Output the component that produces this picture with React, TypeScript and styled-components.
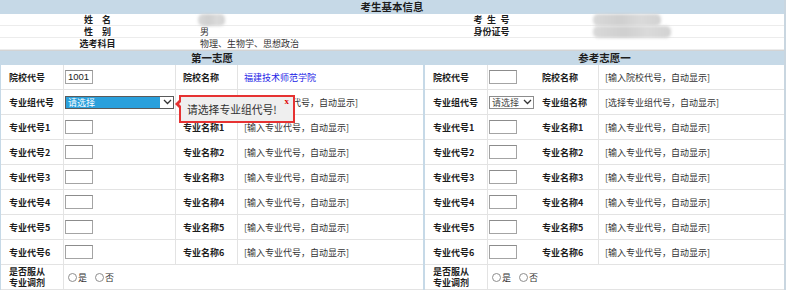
import React from "react";
import styled, { createGlobalStyle } from "styled-components";

const BLUE = "#c6d9e7";
const LINE = "#e3e3e3";

const Global = createGlobalStyle`
  html, body { margin: 0; padding: 0; background: #ffffff; }
  body {
    font-family: "Noto Sans CJK SC", "Noto Sans", sans-serif;
    font-size: 9px;
    color: #222;
  }
  * { box-sizing: border-box; }
`;

const Page = styled.div`
  position: relative;
  width: 786px;
  border-right: 2px solid #c9d6e0;
`;

const TopBar = styled.div`
  height: 14px;
  line-height: 14px;
  background: ${BLUE};
  text-align: center;
  font-weight: 700;
  font-size: 10.5px;
  color: #1c1c1c;
`;

const InfoGrid = styled.div`
  display: grid;
  grid-template-columns: 195px 198px 197px 1fr;
  grid-auto-rows: 12px;
`;

const InfoLabel = styled.div`
  border-bottom: 1px solid #ececec;
  text-align: center;
  font-weight: 700;
  line-height: 11px;
  color: #1c1c1c;
`;

const InfoValue = styled.div`
  border-bottom: 1px solid #ececec;
  padding-left: 5px;
  line-height: 11px;
  color: #333;
  display: flex;
  align-items: center;
`;

const Blur = styled.span<{ $w: number }>`
  display: inline-block;
  width: ${(p) => p.$w}px;
  height: 12px;
  border-radius: 5px;
  background: linear-gradient(90deg, #d9d9d9, #cfcfcf 40%, #dadada 70%, #d2d2d2);
  filter: blur(1.5px);
  margin-left: -2px;
`;

const Sep = styled.div`
  height: 1px;
  background: #d3d3d3;
`;

const Panels = styled.div`
  display: flex;
`;

const Panel = styled.div<{ $w?: number }>`
  ${(p) => (p.$w ? `width: ${p.$w}px;` : "flex: 1;")}
`;

const LeftPanel = styled(Panel)`
  border-left: 1px solid ${BLUE};
`;

const Divider = styled.div`
  width: 2px;
  background: ${BLUE};
`;

const PanelHeader = styled.div`
  height: 14px;
  line-height: 14px;
  background: ${BLUE};
  text-align: center;
  font-weight: 700;
  font-size: 10.5px;
  color: #1c1c1c;
`;

const Row = styled.div<{ $cols: string }>`
  display: grid;
  grid-template-columns: ${(p) => p.$cols};
  height: 25px;
  border-bottom: 1px solid ${LINE};
`;

const Cell = styled.div<{ $pad?: number; $line?: boolean }>`
  display: flex;
  align-items: center;
  padding-left: ${(p) => p.$pad ?? 0}px;
  border-right: ${(p) => (p.$line ? `1px solid ${LINE}` : "none")};
  min-width: 0;
  white-space: nowrap;
`;

const Label = styled(Cell)`
  font-weight: 700;
  color: #1c1c1c;
  line-height: 11px;
`;

const Value = styled(Cell)<{ $link?: boolean }>`
  color: ${(p) => (p.$link ? "#2222e6" : "#333")};
`;

const TextInput = styled.div`
  width: 28px;
  height: 14px;
  border: 1px solid #a4a4a4;
  border-top-color: #8c8c8c;
  background: #fff;
  font-family: "Liberation Sans", Arial, sans-serif;
  font-size: 9.5px;
  line-height: 12px;
  padding-left: 2px;
  color: #222;
`;

const SelectBox = styled.div<{ $w: number; $active?: boolean }>`
  display: flex;
  align-items: stretch;
  width: ${(p) => p.$w}px;
  height: 13px;
  border: 1px solid ${(p) => (p.$active ? "#5a5a5a" : "#8c8c8c")};
  background: #fff;
`;

const SelectText = styled.div<{ $active?: boolean }>`
  flex: 1;
  padding-left: 2px;
  line-height: 11px;
  font-size: 9px;
  background: ${(p) => (p.$active ? "#2aa0dc" : "#fff")};
  color: ${(p) => (p.$active ? "#fff" : "#444")};
  ${(p) => (p.$active ? "margin: 0 1px 0 0;" : "")}
`;

const SelectArrow = styled.div`
  width: 12px;
  display: flex;
  align-items: center;
  justify-content: center;
`;

const RadioGroup = styled.div`
  display: flex;
  align-items: center;
  gap: 8px;
  color: #333;
`;

const RadioOption = styled.label`
  display: flex;
  align-items: center;
  gap: 1px;
`;

const RadioDot = styled.span`
  display: inline-block;
  width: 9px;
  height: 9px;
  border-radius: 50%;
  border: 1px solid #8e8e8e;
  background: #fff;
`;

const Tooltip = styled.div`
  position: absolute;
  left: 179px;
  top: 95px;
  width: 116px;
  height: 28px;
  border: 2px solid #e63232;
  background: #efefef;
  padding-left: 6px;
  display: flex;
  align-items: center;
  font-size: 10.8px;
  color: #333;
  &::before {
    content: "";
    position: absolute;
    left: -6px;
    top: 3px;
    border-style: solid;
    border-width: 4px 4px 4px 0;
    border-color: transparent #e63232 transparent transparent;
  }
  &::after {
    content: "";
    position: absolute;
    left: -2px;
    top: 5px;
    border-style: solid;
    border-width: 2px 2px 2px 0;
    border-color: transparent #efefef transparent transparent;
  }
`;

const Close = styled.span`
  position: absolute;
  right: 4px;
  top: 0px;
  line-height: 9px;
  font-family: "Liberation Serif", serif;
  font-weight: 700;
  font-size: 9px;
  color: #e00000;
`;

const Chevron = () => (
  <svg width="9" height="6" viewBox="0 0 9 6">
    <polyline points="1,1 4.5,4.5 8,1" fill="none" stroke="#333" strokeWidth="1.3" />
  </svg>
);

const Select: React.FC<{ w: number; active?: boolean }> = ({ w, active }) => (
  <SelectBox $w={w} $active={active}>
    <SelectText $active={active}>请选择</SelectText>
    <SelectArrow>
      <Chevron />
    </SelectArrow>
  </SelectBox>
);

type Side = {
  title: string;
  cols: string;
  first?: boolean;
};

const majors = [1, 2, 3, 4, 5, 6];

const PanelBody: React.FC<{ side: Side }> = ({ side }) => {
  const { cols, first } = side;
  const midLine = !!first;
  return (
    <>
      <PanelHeader>{side.title}</PanelHeader>
      <Row $cols={cols}>
        <Label $pad={8} $line>院校代号</Label>
        <Cell $pad={1} $line={midLine}>
          <TextInput>{first ? "1001" : ""}</TextInput>
        </Cell>
        <Label $pad={7} $line>院校名称</Label>
        <Value $pad={6} $link={first}>
          {first ? "福建技术师范学院" : "[输入院校代号，自动显示]"}
        </Value>
      </Row>
      <Row $cols={cols}>
        <Label $pad={8} $line>专业组代号</Label>
        <Cell $pad={1} $line={midLine}>
          <Select w={first ? 109 : 45} active={first} />
        </Cell>
        <Label $pad={7} $line>专业组名称</Label>
        <Value $pad={6}>[选择专业组代号，自动显示]</Value>
      </Row>
      {majors.map((n) => (
        <Row $cols={cols} key={n}>
          <Label $pad={8} $line>专业代号{n}</Label>
          <Cell $pad={1} $line={midLine}>
            <TextInput />
          </Cell>
          <Label $pad={7} $line>专业名称{n}</Label>
          <Value $pad={6}>[输入专业代号，自动显示]</Value>
        </Row>
      ))}
      <Row $cols={cols}>
        <Label $pad={8} $line>
          是否服从
          <br />
          专业调剂
        </Label>
        <Cell $pad={4}>
          <RadioGroup>
            <RadioOption>
              <RadioDot />是
            </RadioOption>
            <RadioOption>
              <RadioDot />否
            </RadioOption>
          </RadioGroup>
        </Cell>
      </Row>
    </>
  );
};

const leftSide: Side = { title: "第一志愿", cols: "63px 112px 62px 1fr", first: true };
const rightSide: Side = { title: "参考志愿一", cols: "63px 47px 64px 1fr" };

export default function App() {
  return (
    <>
      <Global />
      <Page>
        <TopBar>考生基本信息</TopBar>
        <InfoGrid>
          <InfoLabel>姓　名</InfoLabel>
          <InfoValue>
            <Blur $w={27} />
          </InfoValue>
          <InfoLabel>考{"\u2002"}生{"\u2002"}号</InfoLabel>
          <InfoValue>
            <Blur $w={68} />
          </InfoValue>
          <InfoLabel>性　别</InfoLabel>
          <InfoValue>男</InfoValue>
          <InfoLabel>身份证号</InfoLabel>
          <InfoValue>
            <Blur $w={78} />
          </InfoValue>
          <InfoLabel>选考科目</InfoLabel>
          <InfoValue>物理、生物学、思想政治</InfoValue>
          <InfoLabel />
          <InfoValue />
        </InfoGrid>
        <Sep />
        <Panels>
          <LeftPanel $w={423}>
            <PanelBody side={leftSide} />
          </LeftPanel>
          <Divider />
          <Panel>
            <PanelBody side={rightSide} />
          </Panel>
        </Panels>
        <Tooltip>
          请选择专业组代号!
          <Close>x</Close>
        </Tooltip>
      </Page>
    </>
  );
}
